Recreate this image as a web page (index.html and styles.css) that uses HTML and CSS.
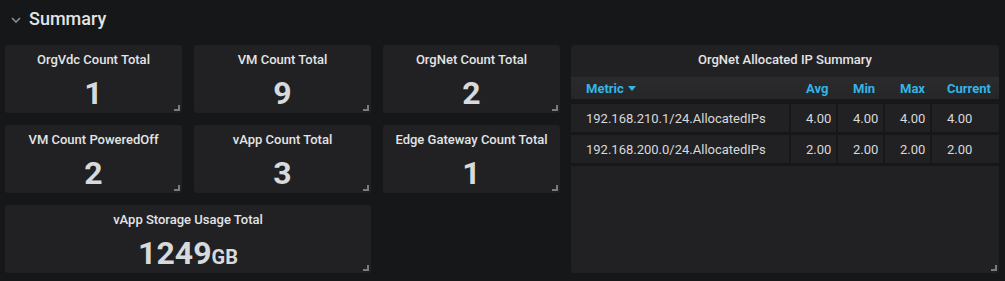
FILE: index.html
```html
<!DOCTYPE html>
<html>
<head>
    <meta charset="utf-8">
    <title>Summary</title>
    <link rel="stylesheet" href="styles.css">
</head>
<body>
<div class="dashboard">
    <div class="row-title">
        <svg class="chevron" width="10" height="6" viewBox="0 0 10 6">
            <path d="M1 1 L5 5 L9 1" fill="none" stroke="#8e8e8e" stroke-width="1.6"/>
        </svg>
        <span>Summary</span>
    </div>
    <div class="grid">
        <div class="panel">
            <div class="panel-title">OrgVdc Count Total</div>
            <div class="value">1</div>
        </div>
        <div class="panel">
            <div class="panel-title">VM Count Total</div>
            <div class="value">9</div>
        </div>
        <div class="panel">
            <div class="panel-title">OrgNet Count Total</div>
            <div class="value">2</div>
        </div>
        <div class="panel table-panel">
            <div class="panel-title">OrgNet Allocated IP Summary</div>
            <table class="metrics">
                <thead>
                    <tr>
                        <th class="col-metric">Metric <span class="caret"></span></th>
                        <th class="col-num">Avg</th>
                        <th class="col-num">Min</th>
                        <th class="col-num">Max</th>
                        <th class="col-cur">Current</th>
                    </tr>
                </thead>
                <tbody>
                    <tr>
                        <td>192.168.210.1/24.AllocatedIPs</td>
                        <td>4.00</td>
                        <td>4.00</td>
                        <td>4.00</td>
                        <td>4.00</td>
                    </tr>
                    <tr>
                        <td>192.168.200.0/24.AllocatedIPs</td>
                        <td>2.00</td>
                        <td>2.00</td>
                        <td>2.00</td>
                        <td>2.00</td>
                    </tr>
                </tbody>
            </table>
        </div>
        <div class="panel">
            <div class="panel-title">VM Count PoweredOff</div>
            <div class="value">2</div>
        </div>
        <div class="panel">
            <div class="panel-title">vApp Count Total</div>
            <div class="value">3</div>
        </div>
        <div class="panel">
            <div class="panel-title">Edge Gateway Count Total</div>
            <div class="value">1</div>
        </div>
        <div class="panel wide">
            <div class="panel-title">vApp Storage Usage Total</div>
            <div class="value">1249<span class="unit">GB</span></div>
        </div>
    </div>
</div>
</body>
</html>
```

FILE: styles.css
```css
body {
    margin: 0;
    background-color: #161719;
    font-family: Roboto, "Liberation Sans", sans-serif;
    color: #d8d9da;
}

.dashboard {
    padding: 0 6px 0 5px;
}

.row-title {
    display: flex;
    align-items: center;
    height: 36px;
    padding-left: 6px;
    font-size: 18px;
    font-weight: 500;
    color: #e3e4e5;
}

.chevron {
    margin: 3px 8px 0 0;
}

.grid {
    display: grid;
    grid-template-columns: 177px 177px 177px 1fr;
    grid-template-rows: 68px 68px 68px;
    column-gap: 12px;
    row-gap: 12px;
    margin-top: 9px;
}

.panel {
    position: relative;
    background-color: #212124;
    border-radius: 3px;
    text-align: center;
}

.panel::after {
    content: "";
    position: absolute;
    right: 2px;
    bottom: 2px;
    width: 4px;
    height: 4px;
    border-right: 2px solid #7b7b7b;
    border-bottom: 2px solid #7b7b7b;
}

.panel-title {
    padding-top: 7px;
    font-size: 13px;
    line-height: 16px;
    font-weight: 500;
    color: #e3e4e5;
}

.value {
    margin-top: 9px;
    font-size: 32px;
    line-height: 32px;
    font-weight: 700;
    color: #d8d9da;
}

.unit {
    font-size: 20px;
}

.wide {
    grid-column: 1 / 3;
}

.table-panel {
    grid-column: 4;
    grid-row: 1 / 4;
    margin-left: -1px;
}

.table-panel .panel-title {
    height: 25px;
}

.metrics {
    width: 100%;
    table-layout: fixed;
    border-collapse: separate;
    border-spacing: 0;
    text-align: left;
    font-size: 13px;
}

.metrics th,
.metrics td {
    box-sizing: border-box;
    padding: 0 0 0 15px;
}

.metrics th {
    height: 22px;
    background: linear-gradient(#2b2b2e, #262629);
    color: #33b5e5;
    font-weight: 700;
    border-bottom: 5px solid #161719;
    height: 27px;
}

.col-metric {
    width: 220px;
}

.col-num {
    width: 47px;
}

.caret {
    display: inline-block;
    vertical-align: middle;
    margin: 0 0 2px 1px;
    border-left: 4px solid transparent;
    border-right: 4px solid transparent;
    border-top: 5px solid #33b5e5;
}

.metrics td {
    height: 31px;
    color: #d8d9da;
    border-right: 2px solid #161719;
    border-bottom: 3px solid #161719;
}

.metrics td:last-child {
    border-right: none;
}
```
